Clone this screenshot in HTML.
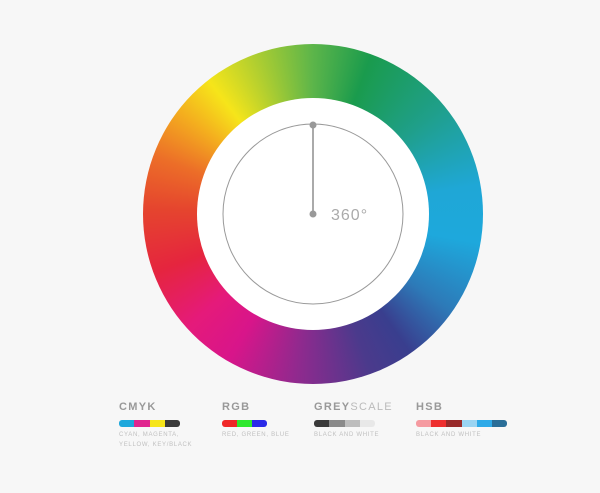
<!DOCTYPE html>
<html><head><style>
body{margin:0;width:600px;height:493px;background:#f7f7f7;position:relative;overflow:hidden;font-family:"Liberation Sans",sans-serif}
.ring{position:absolute;left:143px;top:44px;width:340px;height:340px;border-radius:50%;
background:conic-gradient(from 0deg,#5cb54a 0deg,#1a9b4d 20deg,#1f9f8a 50deg,#1fa7d6 80deg,#1ea8dc 100deg,#2d7ab8 125deg,#393e8e 145deg,#4b3a8c 160deg,#8e2a8e 185deg,#d8158a 210deg,#e51a7a 228deg,#e5253e 250deg,#e5452e 272deg,#ec6e28 290deg,#f4b01e 308deg,#f6e51a 322deg,#b6d02e 338deg,#5cb54a 360deg)}
.inner{position:absolute;left:197px;top:98px;width:232px;height:232px;border-radius:50%;background:#fff}
.t{position:absolute;font-weight:bold;font-size:11px;letter-spacing:1.3px;color:#999}
.bar{position:absolute;top:420px;height:7px;border-radius:3px;display:flex;overflow:hidden}
.bar i{flex:1}
.s{position:absolute;top:431px;font-size:6px;letter-spacing:.7px;color:#c0c0c0;line-height:9.5px}
</style></head><body>
<div class="ring"></div><div class="inner"></div>
<svg style="position:absolute;left:0;top:0" width="600" height="493">
<circle cx="313" cy="214" r="90" fill="none" stroke="#999" stroke-width="1"/>
<line x1="313" y1="125" x2="313" y2="214" stroke="#aaa" stroke-width="2"/>
<circle cx="313" cy="125" r="3.5" fill="#999"/><circle cx="313" cy="214" r="3.5" fill="#999"/>
<text x="331" y="220" font-family="Liberation Sans" font-size="16" fill="#aaa" letter-spacing="1">360°</text>
</svg>
<div class="t" style="left:119px;top:401px">CMYK</div>
<div class="bar" style="left:119px;width:61px"><i style="background:#1ea8dc"></i><i style="background:#e0268f"></i><i style="background:#f6e51a"></i><i style="background:#3a3a3a"></i></div>
<div class="s" style="left:119px">CYAN, MAGENTA,<br>YELLOW, KEY/BLACK</div>
<div class="t" style="left:222px;top:401px">RGB</div>
<div class="bar" style="left:222px;width:45px"><i style="background:#f02828"></i><i style="background:#2ee82e"></i><i style="background:#2a2ae8"></i></div>
<div class="s" style="left:222px">RED, GREEN, BLUE</div>
<div class="t" style="left:314px;top:401px">GREY<span style="font-weight:normal;color:#bbb">SCALE</span></div>
<div class="bar" style="left:314px;width:61px"><i style="background:#3a3a3a"></i><i style="background:#8a8a8a"></i><i style="background:#bdbdbd"></i><i style="background:#e8e8e8"></i></div>
<div class="s" style="left:314px">BLACK AND WHITE</div>
<div class="t" style="left:416px;top:401px">HSB</div>
<div class="bar" style="left:416px;width:91px"><i style="background:#f59aa0"></i><i style="background:#ee2e2e"></i><i style="background:#982a2a"></i><i style="background:#9ad4f2"></i><i style="background:#2eaae8"></i><i style="background:#2a6e98"></i></div>
<div class="s" style="left:416px">BLACK AND WHITE</div>
</body></html>
